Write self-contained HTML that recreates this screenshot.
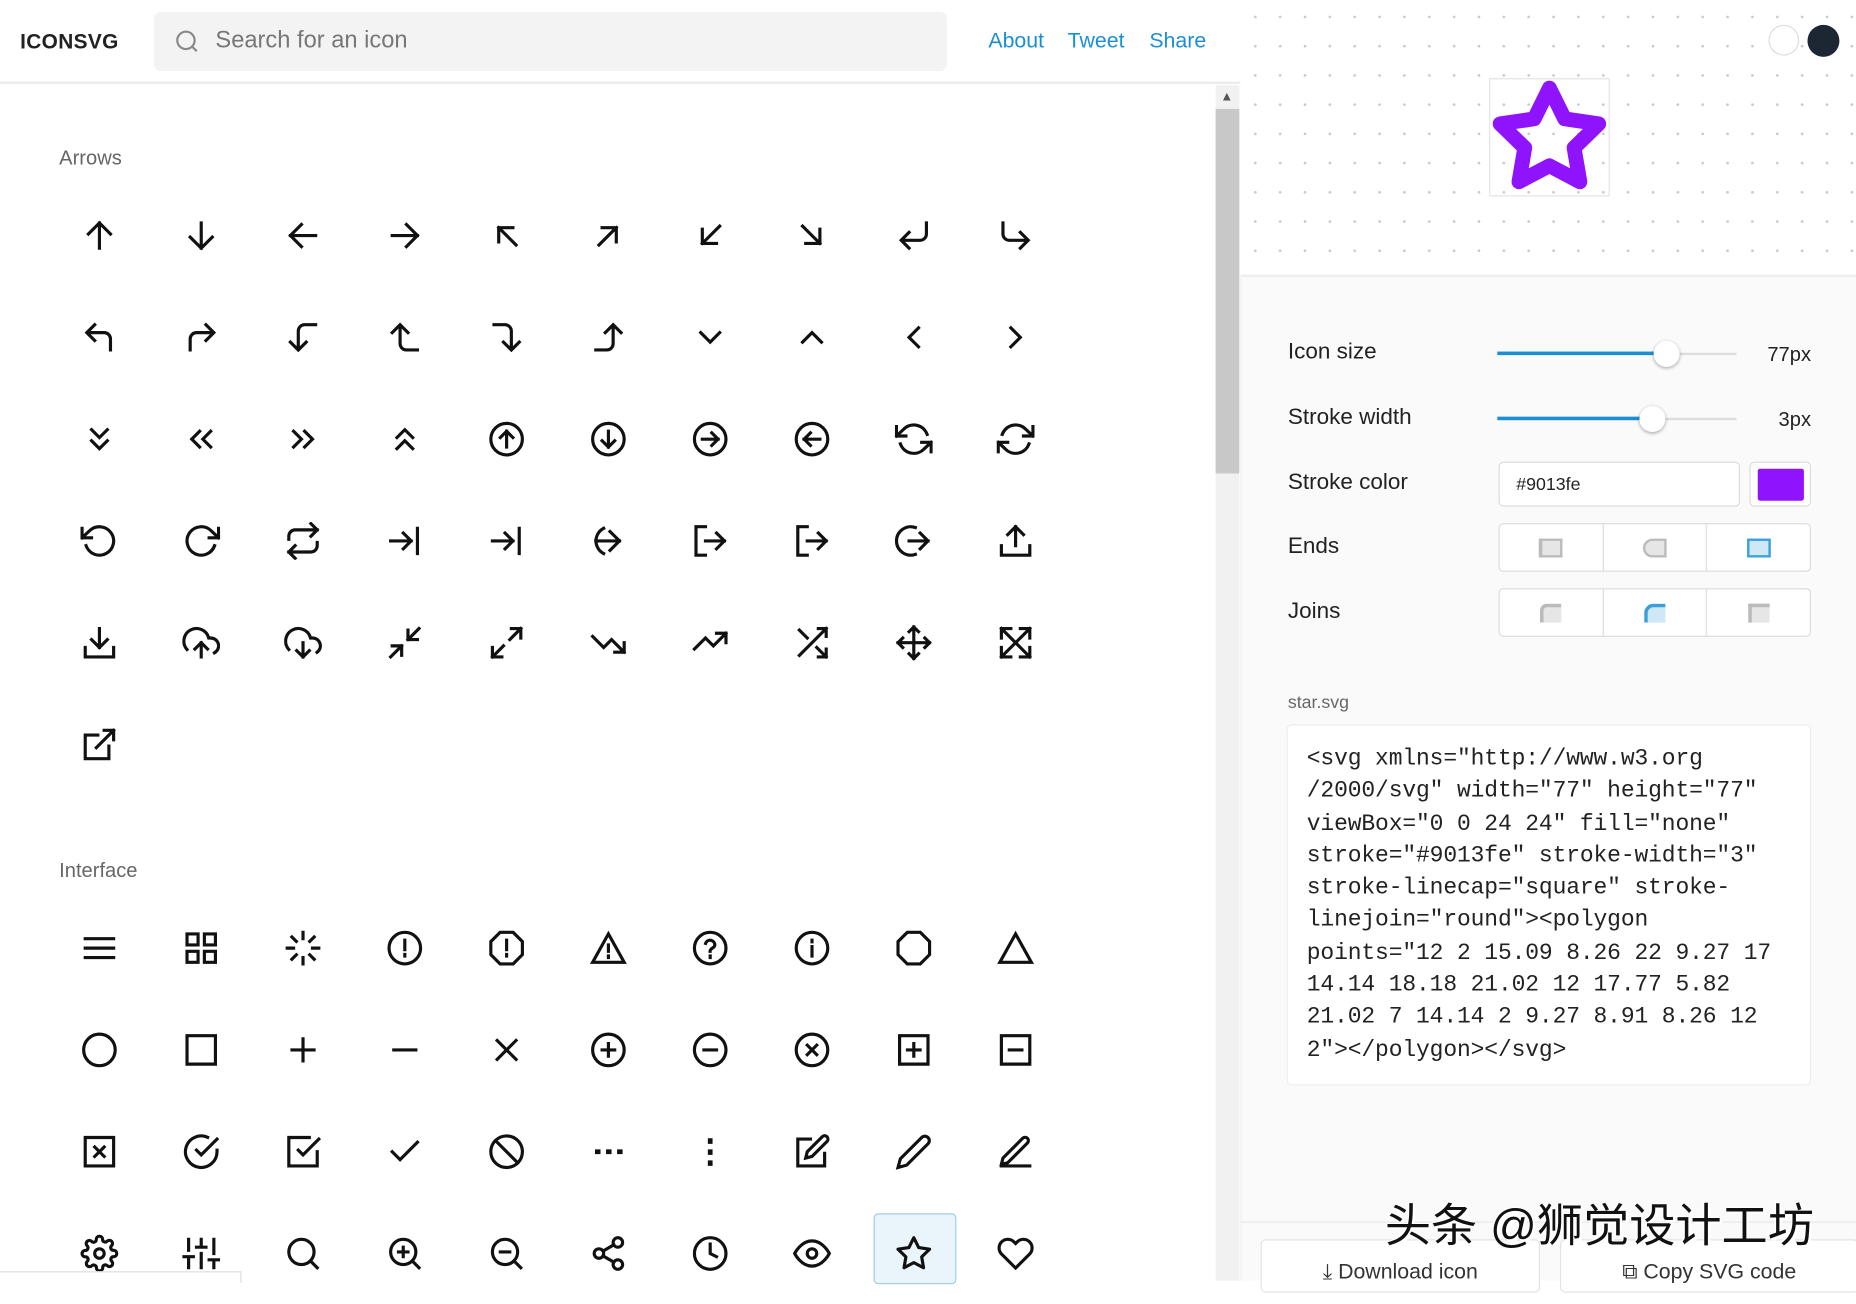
<!DOCTYPE html>
<html><head><meta charset="utf-8">
<style>
*{box-sizing:border-box;margin:0;padding:0}
html,body{width:1856px;height:1281px;overflow:hidden;background:#fff}
#w{position:absolute;left:0;top:0;width:1568px;height:1082px;transform:scale(1.18367);transform-origin:0 0;font-family:"Liberation Sans",sans-serif;color:#222}
.abs{position:absolute}
#hdr{left:0;top:0;width:1048px;height:71px;border-bottom:2px solid #ececec;background:#fff}
.logo{left:17px;top:25px;font-size:17.6px;font-weight:bold;letter-spacing:.3px;color:#222}
.search{left:130px;top:10px;width:670px;height:50px;background:#f3f3f3;border-radius:6px}
.search span{position:absolute;left:52px;top:13px;font-size:20px;color:#777}
.links{top:24px;font-size:18px;color:#1a8fd6}
.sec{left:50px;font-size:17px;color:#666}
.row{position:absolute;left:41px;display:flex}
.row div{width:86px;height:86px;display:flex;align-items:center;justify-content:center}
.row svg{width:32px;height:32px;fill:none;stroke:#111;stroke-width:2;stroke-linecap:square;stroke-linejoin:miter}
#sb{left:1027px;top:72px;width:20px;height:1010px;background:#f1f1f1}
#thumb{left:1027px;top:92px;width:20px;height:308px;background:#c8c8c8}
#right{left:1048px;top:0;width:520px;height:1082px;background:#fafafa;border-left:1px solid #eee}
#prev{left:1048px;top:0;width:520px;height:234px;background-color:#fff;background-image:radial-gradient(circle,#c9c9c9 1px,transparent 1.3px);background-size:21px 24.7px;background-position:2px 2px;border-bottom:2px solid #eee}
.lbl{left:1088px;font-size:19px;color:#222}
.track{left:1265px;width:202px;height:2px;background:#ddd}
.fill{left:1265px;height:3px;background:#1a8fd6}
.knob{width:22px;height:22px;border-radius:50%;background:#fff;box-shadow:0 1px 3px rgba(0,0,0,.35)}
.val{right:38px;font-size:17px;color:#222}
.seg{left:1266px;width:264px;height:41px;border:1px solid #ddd;border-radius:4px;background:#fff;display:flex}
.seg>div{flex:1;border-right:1px solid #ddd;display:flex;align-items:center;justify-content:center}
.seg>div:last-child{border-right:none}
.seg>div>div{flex:none}
pre{position:absolute;left:1087px;top:612px;width:443px;height:305px;background:#fff;border:1px solid #eee;border-radius:4px;padding:15px 16px;font-family:"Liberation Mono",monospace;font-size:19.4px;line-height:27.3px;color:#222;white-space:pre;letter-spacing:-.1px}
.btn{top:1047px;height:45px;background:#fff;border:1px solid #e3e3e3;border-radius:4px;font-size:18px;color:#333;text-align:center;padding-top:16px}
</style></head><body><div id="w">

<div id="hdr" class="abs"></div>
<div class="abs logo">ICONSVG</div>
<div class="abs search"><svg class="abs" style="left:17px;top:14px" width="22" height="22" viewBox="0 0 24 24" fill="none" stroke="#888" stroke-width="2"><circle cx="11" cy="11" r="8"/><path d="M21 21l-4.35-4.35"/></svg><span>Search for an icon</span></div>
<div class="abs links" style="left:835px">About</div>
<div class="abs links" style="left:902px">Tweet</div>
<div class="abs links" style="left:971px">Share</div>

<div class="abs sec" style="top:124px">Arrows</div>
<div class="row" style="top:156px">
<div><svg viewBox="0 0 24 24"><path d="M12 20V4M5 11l7-7 7 7"/></svg></div>
<div><svg viewBox="0 0 24 24"><path d="M12 4v16M5 13l7 7 7-7"/></svg></div>
<div><svg viewBox="0 0 24 24"><path d="M20 12H4M11 5l-7 7 7 7"/></svg></div>
<div><svg viewBox="0 0 24 24"><path d="M4 12h16M13 5l7 7-7 7"/></svg></div>
<div><svg viewBox="0 0 24 24"><path d="M18 18L7 7M7 16V7h9"/></svg></div>
<div><svg viewBox="0 0 24 24"><path d="M6 18L17 7M8 7h9v9"/></svg></div>
<div><svg viewBox="0 0 24 24"><path d="M18 6L7 17M7 8v9h9"/></svg></div>
<div><svg viewBox="0 0 24 24"><path d="M6 6l11 11M17 8v9H8"/></svg></div>
<div><svg viewBox="0 0 24 24"><path d="M20 4v7a4 4 0 0 1-4 4H5M9 10l-5 5 5 5"/></svg></div>
<div><svg viewBox="0 0 24 24"><path d="M4 4v7a4 4 0 0 0 4 4h11M15 10l5 5-5 5"/></svg></div>
</div>
<div class="row" style="top:242px">
<div><svg viewBox="0 0 24 24"><path d="M9 14L4 9l5-5M5 9h10a4 4 0 0 1 4 4v7"/></svg></div>
<div><svg viewBox="0 0 24 24"><path d="M15 14l5-5-5-5M19 9H9a4 4 0 0 0-4 4v7"/></svg></div>
<div><svg viewBox="0 0 24 24"><path d="M14 15l-5 5-5-5M20 4h-7a4 4 0 0 0-4 4v11"/></svg></div>
<div><svg viewBox="0 0 24 24"><path d="M14 9L9 4 4 9M20 20h-7a4 4 0 0 1-4-4V5"/></svg></div>
<div><svg viewBox="0 0 24 24"><path d="M10 15l5 5 5-5M4 4h7a4 4 0 0 1 4 4v11"/></svg></div>
<div><svg viewBox="0 0 24 24"><path d="M10 9l5-5 5 5M4 20h7a4 4 0 0 0 4-4V5"/></svg></div>
<div><svg viewBox="0 0 24 24"><path d="M6 9l6 6 6-6"/></svg></div>
<div><svg viewBox="0 0 24 24"><path d="M18 15l-6-6-6 6"/></svg></div>
<div><svg viewBox="0 0 24 24"><path d="M15 18l-6-6 6-6"/></svg></div>
<div><svg viewBox="0 0 24 24"><path d="M9 18l6-6-6-6"/></svg></div>
</div>
<div class="row" style="top:328px">
<div><svg viewBox="0 0 24 24"><path d="M7 13l5 5 5-5M7 6l5 5 5-5"/></svg></div>
<div><svg viewBox="0 0 24 24"><path d="M11 17l-5-5 5-5M18 17l-5-5 5-5"/></svg></div>
<div><svg viewBox="0 0 24 24"><path d="M13 17l5-5-5-5M6 17l5-5-5-5"/></svg></div>
<div><svg viewBox="0 0 24 24"><path d="M17 11l-5-5-5 5M17 18l-5-5-5 5"/></svg></div>
<div><svg viewBox="0 0 24 24"><circle cx="12" cy="12" r="10"/><path d="M12 17V7M8 11l4-4 4 4"/></svg></div>
<div><svg viewBox="0 0 24 24"><circle cx="12" cy="12" r="10"/><path d="M12 7v10M8 13l4 4 4-4"/></svg></div>
<div><svg viewBox="0 0 24 24"><circle cx="12" cy="12" r="10"/><path d="M7 12h10M13 8l4 4-4 4"/></svg></div>
<div><svg viewBox="0 0 24 24"><circle cx="12" cy="12" r="10"/><path d="M17 12H7M11 8l-4 4 4 4"/></svg></div>
<div><svg viewBox="0 0 24 24"><path d="M1 4v6h6M23 20v-6h-6M20.49 9A9 9 0 0 0 5.640 5.64L1 10m22 4l-4.64 4.36A9 9 0 0 1 3.51 15"/></svg></div>
<div><svg viewBox="0 0 24 24"><path d="M23 4v6h-6M1 20v-6h6M3.51 9a9 9 0 0 1 14.85-3.36L23 10M1 14l4.64 4.36A9 9 0 0 0 20.49 15"/></svg></div>
</div>
<div class="row" style="top:414px">
<div><svg viewBox="0 0 24 24"><path d="M1 4v6h6M3.51 15a9 9 0 1 0 2.13-9.36L1 10"/></svg></div>
<div><svg viewBox="0 0 24 24"><path d="M23 4v6h-6M20.49 15a9 9 0 1 1-2.12-9.36L23 10"/></svg></div>
<div><svg viewBox="0 0 24 24"><path d="M17 1l4 4-4 4M3 11V9a4 4 0 0 1 4-4h14M7 23l-4-4 4-4M21 13v2a4 4 0 0 1-4 4H3"/></svg></div>
<div><svg viewBox="0 0 24 24"><path d="M3 12h13M11 7l5 5-5 5M20 4v16"/></svg></div>
<div><svg viewBox="0 0 24 24"><path d="M3 12h13M11 7l5 5-5 5M20 4v16"/></svg></div>
<div><svg viewBox="0 0 24 24"><path d="M13 6l6 6-6 6M4 12h15M9 4a9 9 0 0 0 0 16"/></svg></div>
<div><svg viewBox="0 0 24 24"><path d="M9 21H3V3h6M16 17l5-5-5-5M21 12H9"/></svg></div>
<div><svg viewBox="0 0 24 24"><path d="M9 21H3V3h6M16 17l5-5-5-5M21 12H9"/></svg></div>
<div><svg viewBox="0 0 24 24"><path d="M16 7l5 5-5 5M21 12H9M13 3.5A9 9 0 1 0 13 20.5"/></svg></div>
<div><svg viewBox="0 0 24 24"><path d="M3 15v6h18v-6M17 8l-5-5-5 5M12 3v12"/></svg></div>
</div>
<div class="row" style="top:500px">
<div><svg viewBox="0 0 24 24"><path d="M3 15v6h18v-6M7 10l5 5 5-5M12 15V3"/></svg></div>
<div><svg viewBox="0 0 24 24"><path d="M16 16l-4-4-4 4M12 12v9M20.39 18.39A5 5 0 0 0 18 9h-1.26A8 8 0 1 0 3 16.3"/></svg></div>
<div><svg viewBox="0 0 24 24"><path d="M8 17l4 4 4-4M12 12v9M20.88 18.09A5 5 0 0 0 18 9h-1.26A8 8 0 1 0 3 16.29"/></svg></div>
<div><svg viewBox="0 0 24 24"><path d="M3 21l7-7M4 14h6v6M21 3l-7 7M14 4v6h6"/></svg></div>
<div><svg viewBox="0 0 24 24"><path d="M15 3h6v6M9 21H3v-6M21 3l-7 7M3 21l7-7"/></svg></div>
<div><svg viewBox="0 0 24 24"><path d="M22 18l-8-8-5 5L2 8M16 18h6v-6"/></svg></div>
<div><svg viewBox="0 0 24 24"><path d="M22 6l-8 8-5-5-7 7M16 6h6v6"/></svg></div>
<div><svg viewBox="0 0 24 24"><path d="M16 3h5v5M4 20L21 3M21 16v5h-5M15 15l6 6M4 4l5 5"/></svg></div>
<div><svg viewBox="0 0 24 24"><path d="M5 9l-3 3 3 3M9 5l3-3 3 3M15 19l-3 3-3-3M19 9l3 3-3 3M2 12h20M12 2v20"/></svg></div>
<div><svg viewBox="0 0 24 24"><path d="M3 9V3h6M15 3h6v6M21 15v6h-6M9 21H3v-6M3 3l18 18M21 3L3 21"/></svg></div>
</div>
<div class="row" style="top:586px">
<div><svg viewBox="0 0 24 24"><path d="M18 13v8H3V6h8M15 3h6v6M10 14L21 3"/></svg></div>
</div>

<div class="abs sec" style="top:726px">Interface</div>
<div class="row" style="top:758px">
<div><svg viewBox="0 0 24 24"><path d="M3 6h18M3 12h18M3 18h18"/></svg></div>
<div><svg viewBox="0 0 24 24"><path d="M3 3h7v7H3zM14 3h7v7h-7zM14 14h7v7h-7zM3 14h7v7H3z"/></svg></div>
<div><svg viewBox="0 0 24 24"><path d="M12 2v4M12 18v4M4.93 4.930l2.83 2.83M16.24 16.24l2.83 2.83M2 12h4M18 12h4M4.93 19.07l2.83-2.83M16.24 7.76l2.83-2.83"/></svg></div>
<div><svg viewBox="0 0 24 24"><circle cx="12" cy="12" r="10"/><path d="M12 7v6M12 16v1"/></svg></div>
<div><svg viewBox="0 0 24 24"><path d="M7.86 2h8.28L22 7.86v8.28L16.14 22H7.86L2 16.14V7.86zM12 7v6M12 16v1"/></svg></div>
<div><svg viewBox="0 0 24 24"><path d="M12 3L2 21h20zM12 10v4M12 17v1"/></svg></div>
<div><svg viewBox="0 0 24 24"><circle cx="12" cy="12" r="10"/><path d="M9.09 9a3 3 0 0 1 5.83 1c0 2-3 2-3 4M12 17v1"/></svg></div>
<div><svg viewBox="0 0 24 24"><circle cx="12" cy="12" r="10"/><path d="M12 17v-6M12 7v1"/></svg></div>
<div><svg viewBox="0 0 24 24"><path d="M7.86 2h8.28L22 7.86v8.28L16.14 22H7.86L2 16.14V7.86z"/></svg></div>
<div><svg viewBox="0 0 24 24"><path d="M12 3L2 21h20z"/></svg></div>
</div>
<div class="row" style="top:844px">
<div><svg viewBox="0 0 24 24"><circle cx="12" cy="12" r="10"/></svg></div>
<div><svg viewBox="0 0 24 24"><path d="M3 3h18v18H3z"/></svg></div>
<div><svg viewBox="0 0 24 24"><path d="M12 5v14M5 12h14"/></svg></div>
<div><svg viewBox="0 0 24 24"><path d="M5 12h14"/></svg></div>
<div><svg viewBox="0 0 24 24"><path d="M18 6L6 18M6 6l12 12"/></svg></div>
<div><svg viewBox="0 0 24 24"><circle cx="12" cy="12" r="10"/><path d="M12 8v8M8 12h8"/></svg></div>
<div><svg viewBox="0 0 24 24"><circle cx="12" cy="12" r="10"/><path d="M8 12h8"/></svg></div>
<div><svg viewBox="0 0 24 24"><circle cx="12" cy="12" r="10"/><path d="M15 9l-6 6M9 9l6 6"/></svg></div>
<div><svg viewBox="0 0 24 24"><path d="M3 3h18v18H3zM12 8v8M8 12h8"/></svg></div>
<div><svg viewBox="0 0 24 24"><path d="M3 3h18v18H3zM8 12h8"/></svg></div>
</div>
<div class="row" style="top:930px">
<div><svg viewBox="0 0 24 24"><path d="M3 3h18v18H3zM9 9l6 6M15 9l-6 6"/></svg></div>
<div><svg viewBox="0 0 24 24"><path d="M22 11.08V12a10 10 0 1 1-5.93-9.14M22 4L12 14.01l-3-3"/></svg></div>
<div><svg viewBox="0 0 24 24"><path d="M9 11l3 3L22 4M21 12v9H3V3h13"/></svg></div>
<div><svg viewBox="0 0 24 24"><path d="M20 6L9 17l-5-5"/></svg></div>
<div><svg viewBox="0 0 24 24"><circle cx="12" cy="12" r="10"/><path d="M4.93 4.93l14.14 14.14"/></svg></div>
<div><svg viewBox="0 0 24 24" style="stroke-width:3"><path d="M5 12h.5M12 12h.5M19 12h.5"/></svg></div>
<div><svg viewBox="0 0 24 24" style="stroke-width:3"><path d="M12 5v.5M12 12v.5M12 19v.5"/></svg></div>
<div><svg viewBox="0 0 24 24"><path d="M11 4H3v17h17v-8M18.5 2.5a2.121 2.121 0 0 1 3 3L12 15l-4 1 1-4 9.5-9.5z"/></svg></div>
<div><svg viewBox="0 0 24 24"><path d="M17 3a2.828 2.828 0 1 1 4 4L7.5 20.5 2 22l1.5-5.5L17 3z"/></svg></div>
<div><svg viewBox="0 0 24 24"><path d="M3 21h18M16.5 3.5a2.121 2.121 0 0 1 3 3L7 19l-4 1 1-4L16.5 3.5z"/></svg></div>
</div>
<div class="abs" style="left:738px;top:1025px;width:70px;height:60px;background:#eaf4fb;border:1px solid #9fcbe8;border-radius:4px"></div>
<div class="row" style="top:1016px">
<div><svg viewBox="0 0 24 24"><circle cx="12" cy="12" r="3"/><path d="M19.4 15a1.65 1.65 0 0 0 .33 1.82l.06.06a2 2 0 0 1 0 2.83 2 2 0 0 1-2.83 0l-.06-.06a1.65 1.65 0 0 0-1.82-.33 1.65 1.65 0 0 0-1 1.51V21a2 2 0 0 1-2 2 2 2 0 0 1-2-2v-.09A1.65 1.65 0 0 0 9 19.4a1.65 1.65 0 0 0-1.82.33l-.06.06a2 2 0 0 1-2.83 0 2 2 0 0 1 0-2.83l.06-.06a1.65 1.65 0 0 0 .33-1.82 1.65 1.65 0 0 0-1.51-1H3a2 2 0 0 1-2-2 2 2 0 0 1 2-2h.09A1.65 1.65 0 0 0 4.6 9a1.65 1.65 0 0 0-.33-1.82l-.06-.06a2 2 0 0 1 0-2.83 2 2 0 0 1 2.83 0l.06.06a1.65 1.65 0 0 0 1.82.33H9a1.65 1.65 0 0 0 1-1.51V3a2 2 0 0 1 2-2 2 2 0 0 1 2 2v.09a1.65 1.65 0 0 0 1 1.51 1.65 1.65 0 0 0 1.82-.33l.06-.06a2 2 0 0 1 2.83 0 2 2 0 0 1 0 2.830l-.06.06a1.65 1.65 0 0 0-.33 1.82V9a1.65 1.65 0 0 0 1.51 1H21a2 2 0 0 1 2 2 2 2 0 0 1-2 2h-.09a1.65 1.65 0 0 0-1.51 1z"/></svg></div>
<div><svg viewBox="0 0 24 24"><path d="M4 21v-7M4 10V3M12 21v-9M12 8V3M20 21v-5M20 12V3M1 14h6M9 8h6M17 16h6"/></svg></div>
<div><svg viewBox="0 0 24 24"><circle cx="11" cy="11" r="8"/><path d="M21 21l-4.35-4.35"/></svg></div>
<div><svg viewBox="0 0 24 24"><circle cx="11" cy="11" r="8"/><path d="M21 21l-4.35-4.35M11 8v6M8 11h6"/></svg></div>
<div><svg viewBox="0 0 24 24"><circle cx="11" cy="11" r="8"/><path d="M21 21l-4.35-4.35M8 11h6"/></svg></div>
<div><svg viewBox="0 0 24 24"><circle cx="18" cy="5" r="3"/><circle cx="6" cy="12" r="3"/><circle cx="18" cy="19" r="3"/><path d="M8.59 13.51l6.83 3.98M15.41 6.51l-6.82 3.98"/></svg></div>
<div><svg viewBox="0 0 24 24"><circle cx="12" cy="12" r="10"/><path d="M12 6v6l4 2"/></svg></div>
<div><svg viewBox="0 0 24 24"><path d="M1 12s4-8 11-8 11 8 11 8-4 8-11 8-11-8-11-8z"/><circle cx="12" cy="12" r="3"/></svg></div>
<div><svg viewBox="0 0 24 24" style="stroke-linejoin:round"><polygon points="12 2 15.09 8.26 22 9.27 17 14.14 18.18 21.02 12 17.77 5.82 21.02 7 14.14 2 9.27 8.91 8.26"/></svg></div>
<div><svg viewBox="0 0 24 24"><path d="M20.84 4.61a5.5 5.5 0 0 0-7.78 0L12 5.67l-1.06-1.06a5.5 5.5 0 0 0-7.78 7.78l1.06 1.06L12 21.23l7.78-7.78 1.06-1.06a5.5 5.5 0 0 0 0-7.78z"/></svg></div>
</div>
<div class="abs" style="left:0;top:1074px;width:204px;height:10px;border:1px solid #ddd;border-bottom:none;border-left:none;background:#fff"></div>

<div id="sb" class="abs"></div>
<div id="thumb" class="abs"></div>
<div class="abs" style="left:1031px;top:76px;font-size:11px;color:#555">&#9650;</div>

<div id="right" class="abs"></div>
<div id="prev" class="abs"></div>
<div class="abs" style="left:1494px;top:21px;width:26px;height:26px;border-radius:50%;background:#fff;border:1px solid #ddd"></div>
<div class="abs" style="left:1527px;top:21px;width:27px;height:27px;border-radius:50%;background:#1c2733"></div>
<div class="abs" style="left:1258px;top:66px;width:102px;height:100px;border:1px solid #e4e4e4;background:transparent"></div>
<svg class="abs" style="left:1259px;top:66px" width="100" height="100" viewBox="0 0 24 24" fill="none" stroke="#9013fe" stroke-width="3" stroke-linecap="square" stroke-linejoin="round"><polygon points="12 2 15.09 8.26 22 9.27 17 14.14 18.18 21.02 12 17.77 5.82 21.02 7 14.14 2 9.27 8.91 8.26"/></svg>

<div class="abs lbl" style="top:287px">Icon size</div>
<div class="abs track" style="top:298px"></div>
<div class="abs fill" style="top:297px;width:142px"></div>
<div class="abs knob" style="left:1397px;top:288px"></div>
<div class="abs val" style="top:290px">77px</div>

<div class="abs lbl" style="top:342px">Stroke width</div>
<div class="abs track" style="top:353px"></div>
<div class="abs fill" style="top:352px;width:131px"></div>
<div class="abs knob" style="left:1385px;top:343px"></div>
<div class="abs val" style="top:345px">3px</div>

<div class="abs lbl" style="top:397px">Stroke color</div>
<div class="abs" style="left:1266px;top:390px;width:204px;height:38px;border:1px solid #ddd;border-radius:4px;background:#fff;font-size:15px;padding:10px 0 0 14px">#9013fe</div>
<div class="abs" style="left:1478px;top:390px;width:52px;height:38px;border:1px solid #ddd;border-radius:4px;background:#fff"><div style="margin:5px 6px;width:39px;height:27px;background:#9013fe;border-radius:2px"></div></div>

<div class="abs lbl" style="top:451px">Ends</div>
<div class="abs seg" style="top:442px">
<div><div style="width:20px;height:16px;background:#e6e6e6;border:2px solid #bbb;border-left-width:3px"></div></div>
<div><div style="width:20px;height:16px;background:#e6e6e6;border:2px solid #bbb;border-radius:8px 0 0 8px"></div></div>
<div><div style="width:20px;height:16px;background:#cfe8f7;border:2px solid #3aa0dd"></div></div>
</div>
<div class="abs lbl" style="top:506px">Joins</div>
<div class="abs seg" style="top:497px">
<div><div style="width:18px;height:16px;background:#e6e6e6;border-top:3px solid #bbb;border-left:3px solid #bbb;border-radius:6px 0 0 0"></div></div>
<div><div style="width:18px;height:16px;background:#cfe8f7;border-top:3px solid #3aa0dd;border-left:3px solid #3aa0dd;border-radius:8px 0 0 0"></div></div>
<div><div style="width:18px;height:16px;background:#e6e6e6;border-top:3px solid #bbb;border-left:3px solid #bbb"></div></div>
</div>

<div class="abs" style="left:1088px;top:585px;font-size:15px;color:#666">star.svg</div>
<pre>&lt;svg xmlns="http://www.w3.org
/2000/svg" width="77" height="77"
viewBox="0 0 24 24" fill="none"
stroke="#9013fe" stroke-width="3"
stroke-linecap="square" stroke-
linejoin="round"&gt;&lt;polygon
points="12 2 15.09 8.26 22 9.27 17
14.14 18.18 21.02 12 17.77 5.82
21.02 7 14.14 2 9.27 8.91 8.26 12
2"&gt;&lt;/polygon&gt;&lt;/svg&gt;</pre>

<div class="abs" style="left:1048px;top:1032px;width:520px;height:1px;background:#e8e8e8"></div>
<div class="abs btn" style="left:1065px;width:236px">&#10515; Download icon</div>
<div class="abs btn" style="left:1318px;width:252px">&#10697; Copy SVG code</div>
<div class="abs" style="left:1170px;top:1005px;font-size:39px;color:#111;font-family:'Liberation Sans','Noto Sans CJK SC',sans-serif;text-shadow:1px 1px 0 #fff,-1px -1px 0 #fff,2px 2px 0 #fff;white-space:nowrap">头条 @狮觉设计工坊</div>
</div></body></html>
